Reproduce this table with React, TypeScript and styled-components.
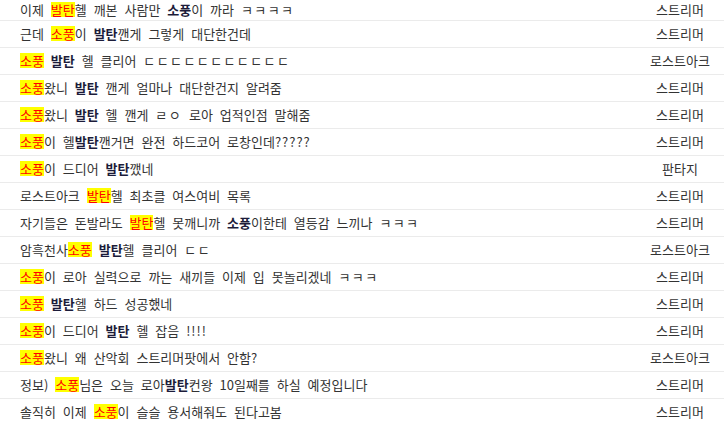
import styled, { createGlobalStyle } from "styled-components";

const GlobalStyle = createGlobalStyle`
  html, body {
    margin: 0;
    padding: 0;
    background: #fff;
  }
  body {
    font-family: "Noto Sans CJK KR", "Noto Sans", sans-serif;
    font-size: 13px;
    color: #333;
    overflow: hidden;
  }
`;

type Part = { t: string; k?: "hit" | "bold" };

const rows: { parts: Part[]; board: string }[] = [
  { parts: [{ t: "이제 " }, { t: "발탄", k: "hit" }, { t: "헬 깨본 사람만 " }, { t: "소풍", k: "bold" }, { t: "이 까라 ㅋㅋㅋㅋ" }], board: "스트리머" },
  { parts: [{ t: "근데 " }, { t: "소풍", k: "hit" }, { t: "이 " }, { t: "발탄", k: "bold" }, { t: "깬게 그렇게 대단한건데" }], board: "스트리머" },
  { parts: [{ t: "소풍", k: "hit" }, { t: " " }, { t: "발탄", k: "bold" }, { t: " 헬 클리어 ㄷㄷㄷㄷㄷㄷㄷㄷㄷㄷㄷ" }], board: "로스트아크" },
  { parts: [{ t: "소풍", k: "hit" }, { t: "왔니 " }, { t: "발탄", k: "bold" }, { t: " 깬게 얼마나 대단한건지 알려줌" }], board: "스트리머" },
  { parts: [{ t: "소풍", k: "hit" }, { t: "왔니 " }, { t: "발탄", k: "bold" }, { t: " 헬 깬게 ㄹㅇ 로아 업적인점 말해줌" }], board: "스트리머" },
  { parts: [{ t: "소풍", k: "hit" }, { t: "이 헬" }, { t: "발탄", k: "bold" }, { t: "깬거면 완전 하드코어 로창인데?????" }], board: "스트리머" },
  { parts: [{ t: "소풍", k: "hit" }, { t: "이 드디어 " }, { t: "발탄", k: "bold" }, { t: "깼네" }], board: "판타지" },
  { parts: [{ t: "로스트아크 " }, { t: "발탄", k: "hit" }, { t: "헬 최초클 여스여비 목록" }], board: "스트리머" },
  { parts: [{ t: "자기들은 돈발라도 " }, { t: "발탄", k: "hit" }, { t: "헬 못깨니까 " }, { t: "소풍", k: "bold" }, { t: "이한테 열등감 느끼나 ㅋㅋㅋ" }], board: "스트리머" },
  { parts: [{ t: "암흑천사" }, { t: "소풍", k: "hit" }, { t: " " }, { t: "발탄", k: "bold" }, { t: "헬 클리어 ㄷㄷ" }], board: "로스트아크" },
  { parts: [{ t: "소풍", k: "hit" }, { t: "이 로아 실력으로 까는 새끼들 이제 입 못놀리겠네 ㅋㅋㅋ" }], board: "스트리머" },
  { parts: [{ t: "소풍", k: "hit" }, { t: " " }, { t: "발탄", k: "bold" }, { t: "헬 하드 성공했네" }], board: "스트리머" },
  { parts: [{ t: "소풍", k: "hit" }, { t: "이 드디어 " }, { t: "발탄", k: "bold" }, { t: " 헬 잡음 !!!!" }], board: "스트리머" },
  { parts: [{ t: "소풍", k: "hit" }, { t: "왔니 왜 산악회 스트리머팟에서 안함?" }], board: "로스트아크" },
  { parts: [{ t: "정보) " }, { t: "소풍", k: "hit" }, { t: "님은 오늘 로아" }, { t: "발탄", k: "bold" }, { t: "컨왕 10일째를 하실 예정입니다" }], board: "스트리머" },
  { parts: [{ t: "솔직히 이제 " }, { t: "소풍", k: "hit" }, { t: "이 슬슬 용서해줘도 된다고봄" }], board: "스트리머" },
];

// jamo runs (ㅋㅋ, ㄷㄷ) and punctuation runs are set a little wider, as in the original
const splitPlain = (text: string) =>
  text.split(/([ㄱ-ㅎㅏ-ㅣ]+|[?!]+)/).filter(Boolean).map((s, i) =>
    /^[ㄱ-ㅎㅏ-ㅣ]+$/.test(s) ? (
      <Jamo key={i}>{s}</Jamo>
    ) : /^[?!]+$/.test(s) ? (
      <Punct key={i}>{s}</Punct>
    ) : (
      <span key={i}>{s}</span>
    )
  );

export default function App() {
  return (
    <>
      <GlobalStyle />
      <List>
        {rows.map((r, i) => (
          <Row key={i}>
            <Title>
              {r.parts.map((p, j) =>
                p.k === "hit" ? (
                  <Hit key={j}>{p.t}</Hit>
                ) : p.k === "bold" ? (
                  <Strong key={j}>{p.t}</Strong>
                ) : (
                  <span key={j}>{splitPlain(p.t)}</span>
                )
              )}
            </Title>
            <Board>{r.board}</Board>
          </Row>
        ))}
      </List>
    </>
  );
}

const List = styled.ul`
  list-style: none;
  margin: 0;
  padding: 0;
  width: 724px;
`;

const Row = styled.li`
  display: flex;
  align-items: center;
  height: 26px;
  border-bottom: 1px solid #ebebeb;
  &:first-child {
    height: 20px;
  }
`;

const Title = styled.div`
  flex: 1;
  min-width: 0;
  padding-left: 20px;
  white-space: nowrap;
  line-height: 16px;
  word-spacing: 4px;
`;

const Jamo = styled.span`
  letter-spacing: 1.4px;
`;

const Punct = styled.span`
  letter-spacing: 1px;
`;

const Hit = styled.span`
  display: inline-block;
  height: 15px;
  line-height: 15px;
  background: #ffff00;
  color: #ff0000;
`;

const Strong = styled.b`
  font-weight: 700;
  color: #1c1c3a;
`;

const Board = styled.div`
  width: 88px;
  text-align: center;
  line-height: 16px;
  white-space: nowrap;
`;
